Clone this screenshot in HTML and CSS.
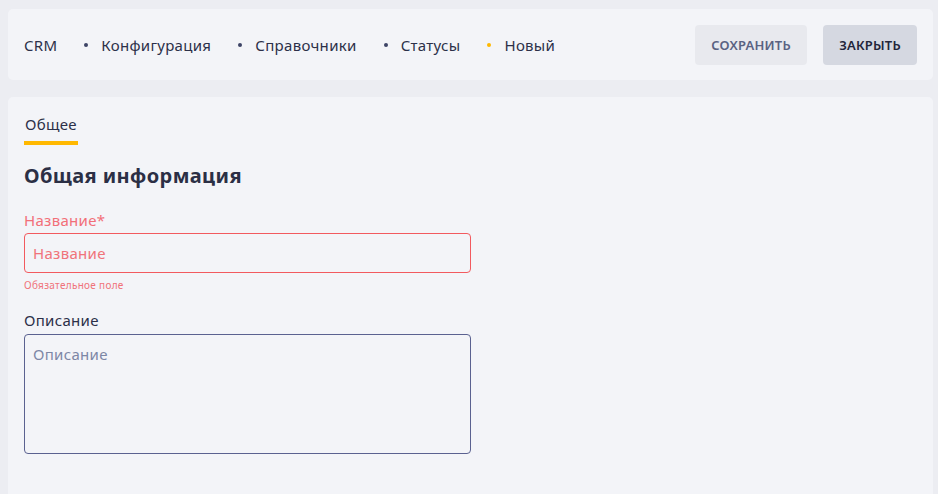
FILE: index.html
```html
<!DOCTYPE html>
<html lang="ru">
<head>
<meta charset="utf-8">
<title>Статусы — Новый</title>
<link rel="stylesheet" href="styles.css">
</head>
<body>
<div class="page">
  <header class="topbar">
    <nav class="crumbs">
      <span class="crumb">CRM</span>
      <span class="dot"></span>
      <span class="crumb">Конфигурация</span>
      <span class="dot"></span>
      <span class="crumb">Справочники</span>
      <span class="dot"></span>
      <span class="crumb">Статусы</span>
      <span class="dot dot-active"></span>
      <span class="crumb">Новый</span>
    </nav>
    <div class="actions">
      <button class="btn btn-save">СОХРАНИТЬ</button>
      <button class="btn btn-close">ЗАКРЫТЬ</button>
    </div>
  </header>
  <main class="card">
    <div class="tabs">
      <div class="tab tab-active">Общее</div>
    </div>
    <h2 class="section-title">Общая информация</h2>
    <div class="field field-error">
      <label class="label">Название*</label>
      <div class="input">Название</div>
      <div class="hint">Обязательное поле</div>
    </div>
    <div class="field">
      <label class="label">Описание</label>
      <div class="textarea">Описание</div>
    </div>
  </main>
</div>
</body>
</html>
```
FILE: styles.css
```css
* { box-sizing: border-box; }
html, body { margin: 0; padding: 0; }
body {
  background: #ecedf2;
  font-family: "Noto Sans", "Open Sans", sans-serif;
  color: #2c3049;
  width: 938px;
  height: 494px;
  overflow: hidden;
  letter-spacing: 0.3px;
}
.page {
  padding: 9px 5px 0 8px;
  display: flex;
  flex-direction: column;
  gap: 17px;
}
.topbar {
  background: #f3f4f8;
  border-radius: 5px;
  height: 71px;
  display: flex;
  align-items: center;
  justify-content: space-between;
  padding: 0 16px;
}
.crumbs {
  display: flex;
  align-items: center;
  font-size: 15px;
  color: #2c3049;
}
.crumb { white-space: nowrap; }
.dot {
  width: 4px;
  height: 4px;
  border-radius: 50%;
  background: #3d4366;
  margin: 0 13px 0 27px;
}
.dot-active { background: #ffb800; }
.actions { display: flex; gap: 16px; }
.btn {
  height: 40px;
  border: none;
  border-radius: 4px;
  font-family: inherit;
  font-size: 13px;
  font-weight: 600;
  letter-spacing: 0.2px;
  padding: 0;
  cursor: pointer;
}
.btn-save { background: #e8e9ee; color: #5a6282; width: 112px; }
.btn-close { background: #d5d8e1; color: #22253a; width: 94px; }
.card {
  background: #f3f4f8;
  border-radius: 5px 5px 0 0;
  min-height: 400px;
  padding: 16px 16px 0 16px;
}
.tabs { display: flex; }
.tab {
  font-size: 15px;
  padding: 1px 1px 7px 1px;
  border-bottom: 4px solid #ffb800;
  color: #2c3049;
}
.section-title {
  margin: 17px 0 0 0;
  font-size: 20px;
  font-weight: 700;
  color: #2b2f45;
  line-height: 28px;
  letter-spacing: 0.4px;
}
.field { width: 447px; display: flex; flex-direction: column; }
.field-error { margin-top: 20px; }
.field + .field { margin-top: 18px; }
.label { font-size: 15px; line-height: 20px; margin-bottom: 3px; color: #2c3049; }
.field + .field .label { margin-bottom: 4px; }
.field-error .label { color: #f26f78; }
.input {
  height: 40px;
  border: 1px solid #f25a5f;
  border-radius: 4px;
  padding: 0 8px;
  display: flex;
  align-items: center;
  font-size: 15px;
  color: #f0737a;
}
.hint { font-size: 10px; color: #f0737a; margin-top: 5px; line-height: 14px; }
.textarea {
  height: 120px;
  border: 1px solid #5a6190;
  border-radius: 4px;
  padding: 9px 8px;
  font-size: 15px;
  color: #7d87a6;
}
```
